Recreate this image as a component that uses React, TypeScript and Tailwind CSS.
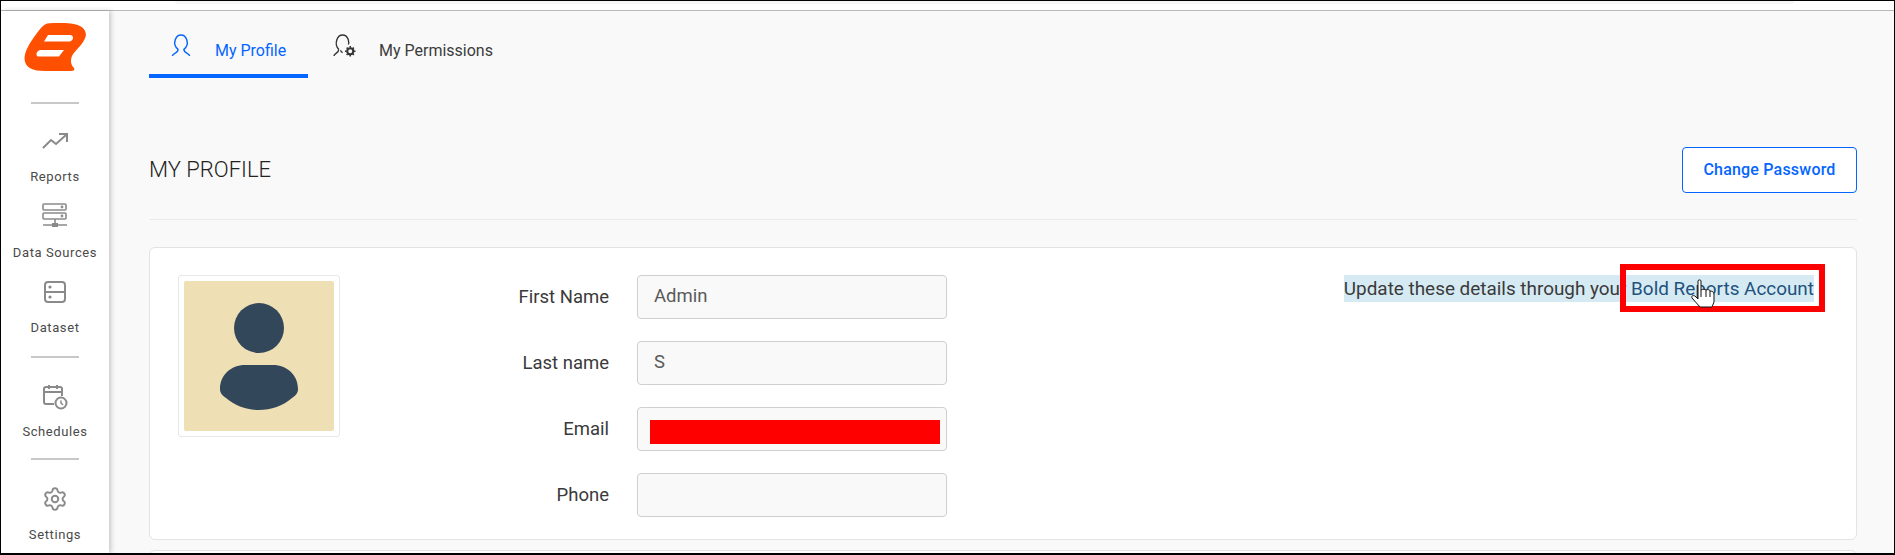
import { Settings } from "lucide-react"

const fields = [
  { label: "First Name", value: "Admin" },
  { label: "Last name", value: "S" },
  { label: "Email", value: "" },
  { label: "Phone", value: "" },
]

function Logo() {
  return (
    <svg width="63" height="49" viewBox="0 0 63 49">
      <path
        fill="#ff4f00"
        fillRule="evenodd"
        d="M23 0.5 C32 -0.5 44 -0.5 52 1.5 C60 3.5 63 9 61.5 14 C59 22 51 27 48 33 C46 38 47 42 50 45 C51 47 50 48 47 48 L21 48 C9 48 0.5 45 0.5 35 C1 27 7 18 13 10 C16 6 19 2 23 0.5 Z M24 12 L46 12 C50 12 50 17 46 18.5 L20 18.5 Z M16 27 L40 27 L35 33.5 L15 33.5 C11 33.5 12 28 16 27 Z"
      />
    </svg>
  )
}

function NavIcon({ name }: { name: string }) {
  const common = { fill: "none", stroke: "#8a8a8a", strokeWidth: 2 }
  if (name === "reports") {
    return (
      <svg width="26" height="20" viewBox="0 0 26 20" {...common}>
        <path d="M1 16 L9 8 L14 12 L24 3" />
        <path d="M17 2 L25 2 L25 10" />
      </svg>
    )
  }
  if (name === "sources") {
    return (
      <svg width="26" height="26" viewBox="0 0 26 26" {...common} strokeWidth="1.6">
        <rect x="1" y="1" width="23" height="6" rx="1" />
        <rect x="1" y="10" width="23" height="6" rx="1" />
        <path d="M13 16 V21 M1 22 H25" />
        <rect x="10" y="20" width="6" height="4" fill="#8a8a8a" stroke="none" />
        <circle cx="20" cy="4" r="0.6" />
        <circle cx="20" cy="13" r="0.6" />
      </svg>
    )
  }
  if (name === "dataset") {
    return (
      <svg width="24" height="24" viewBox="0 0 24 24" {...common}>
        <rect x="2" y="2" width="20" height="20" rx="3" />
        <path d="M2 12 H22" />
        <circle cx="7" cy="7" r="1.6" fill="#8a8a8a" stroke="none" />
        <circle cx="7" cy="17" r="1.6" fill="#8a8a8a" stroke="none" />
      </svg>
    )
  }
  if (name === "schedules") {
    return (
      <svg width="26" height="26" viewBox="0 0 26 26" {...common}>
        <path d="M12 20 H4 C2.5 20 2 19 2 18 V5 C2 4 3 3 4 3 H18 C19 3 20 4 20 5 V12" />
        <path d="M2 8 H20 M7 1 V5 M15 1 V5" />
        <circle cx="19" cy="19" r="5.5" />
        <path d="M19 16.5 V19 L21 21" strokeWidth="1.5" />
      </svg>
    )
  }
  return <Settings size={26} color="#8a8a8a" strokeWidth={1.8} />
}

function NavItem({ icon, label, h, gap }: { icon: string; label: string; h: string; gap: string }) {
  return (
    <div className={`flex flex-col items-center ${h}`}>
      <div className="h-[26px] flex items-center justify-center">
        <NavIcon name={icon} />
      </div>
      <span className={`${gap} text-[13px] leading-[17px] tracking-[0.6px] text-[#4a4a4a] whitespace-nowrap`}>{label}</span>
    </div>
  )
}

function NavLine() {
  return <div className="w-[48px] h-[2px] bg-[#c8c8c8] shrink-0" />
}

export default function App() {
  return (
    <div className="w-[1895px] h-[555px] border border-black border-b-2 overflow-hidden bg-white font-['Roboto',sans-serif] flex flex-col">
      <div className="h-[10px] shrink-0 bg-white border-b border-[#b8b8b8] pl-[174px] pr-[100px]">
        <div className="h-[3px] bg-[#f6f6f6] rounded-b-[6px]" />
      </div>
      <div className="flex flex-1 min-h-0">
        <aside className="w-[108px] shrink-0 bg-white shadow-[2px_0_5px_rgba(0,0,0,0.2)] z-10 flex flex-col items-center pt-[12px]">
          <Logo />
          <div className="mt-[30px]">
            <NavLine />
          </div>
          <div className="mt-[25px]">
            <NavItem icon="reports" label="Reports" h="h-[74px]" gap="mt-[13px]" />
          </div>
          <NavItem icon="sources" label="Data Sources" h="h-[76px]" gap="mt-[15px]" />
          <NavItem icon="dataset" label="Dataset" h="h-[77px]" gap="mt-[14px]" />
          <NavLine />
          <div className="mt-[26px]">
            <NavItem icon="schedules" label="Schedules" h="h-[74px]" gap="mt-[13px]" />
          </div>
          <NavLine />
          <div className="mt-[26px]">
            <NavItem icon="settings" label="Settings" h="h-[60px]" gap="mt-[14px]" />
          </div>
        </aside>
        <main className="flex-1 min-w-0 bg-[#f9f9f9] pl-[40px] pr-[37px]">
          <div className="flex h-[67px]">
            <div className="w-[159px] border-b-4 border-[#0565ff] flex items-center pl-[22px] pt-[17px]">
              <svg className="mb-[11px]" width="20" height="23" viewBox="0 0 20 24" fill="none" stroke="#0565ff" strokeWidth="1.5">
                <path d="M7 16 C3 13 3 9 4 6 C5 3 7 1 10 1 C13 1 15 3 16 6 C17 9 17 13 13 16 C13 18 14 19 16 20 C18 21 19 22 19 23 M7 16 C7 18 6 19 4 20 C2 21 1 22 1 23" />
              </svg>
              <span className="ml-[24px] text-[16px] text-[#0565ff] whitespace-nowrap">My Profile</span>
            </div>
            <div className="flex items-center pl-[25px] pt-[17px] pb-[4px]">
              <svg className="mb-[11px]" width="23" height="23" viewBox="0 0 24 24" fill="none" stroke="#333" strokeWidth="1.4">
                <path d="M6 16 C3 13 3 9 4 6 C5 3 7 1 10 1 C13 1 15 3 16 6 C16.5 8 16.5 10 16 11 M6 16 C6 18 5 19 3.5 20 C2 21 1 22 1 23 M8 17 C8 18 9 19 10 19.5" />
                <circle cx="18" cy="18" r="3.2" strokeWidth="2.2" />
                <path strokeWidth="1.6" d="M18 12.5 V14 M18 22 V23.5 M12.5 18 H14 M22 18 H23.5 M14.2 14.2 L15.2 15.2 M20.8 20.8 L21.8 21.8 M14.2 21.8 L15.2 20.8 M20.8 15.2 L21.8 14.2" />
              </svg>
              <span className="ml-[23px] text-[16px] text-[#3c3c3c] whitespace-nowrap">My Permissions</span>
            </div>
          </div>
          <div className="flex items-center justify-between h-[142px] border-b border-[#ebebeb] pt-[42px]">
            <h1 className="text-[22px] font-light text-[#222] leading-none">MY PROFILE</h1>
            <button className="w-[175px] h-[46px] bg-white border border-[#0565ff] rounded-[4px] text-[16px] font-medium tracking-[0.2px] text-[#0565ff]">
              Change Password
            </button>
          </div>
          <section className="mt-[27px] h-[293px] bg-white border border-[#e3e3e3] rounded-[6px] flex pt-[27px] pl-[28px] relative">
            <div className="w-[162px] h-[162px] border border-[#e8e8e8] rounded-[3px] p-[5px] shrink-0">
              <div className="w-full h-full rounded-[2px] bg-[#efdfb5] flex items-center justify-center">
                <svg width="80" height="107" viewBox="0 0 80 107">
                  <circle cx="40" cy="25" r="25" fill="#33475b" />
                  <path
                    fill="#33475b"
                    d="M26 62 H54 C68 62 79 72 79 86 C79 90 77 92 73 95 C64 103 52 107 40 107 C28 107 16 103 7 95 C3 92 1 90 1 86 C1 72 12 62 26 62 Z"
                  />
                </svg>
              </div>
            </div>
            <div className="ml-[140px] w-[467px] shrink-0 flex flex-col gap-[22px]">
              {fields.map((field, i) => (
                <div key={field.label} className="flex items-center h-[44px]">
                  <label className="w-[129px] shrink-0 pt-[1px] text-right text-[18.5px] text-[#3a3a3a]">{field.label}</label>
                  <div className="ml-[28px] w-[310px] h-[44px] bg-[#f9f9f9] border border-[#cfcfcf] rounded-[4px] pl-[16px] flex items-center text-[18.5px] text-[#5a5a5a] relative">
                    {field.value}
                    {i === 2 && <div className="absolute left-[12px] top-[12px] w-[290px] h-[24px] bg-[#ff0000]" />}
                  </div>
                </div>
              ))}
            </div>
            <div className="absolute right-[42px] top-[27px] h-[27px] bg-[#d6eaf4] text-[18.9px] leading-[27px] text-[#3a3a3a] whitespace-nowrap">
              Update these details through your <span className="text-[#21527d]">Bold Reports Account</span>
            </div>
            <div className="absolute left-[1470px] top-[16px] w-[205px] h-[48px] border-[6px] border-[#ff0000]" />
            <svg className="absolute left-[1540px] top-[31px]" width="26" height="30" viewBox="0 0 26 30">
              <path
                fill="#fff"
                stroke="#111"
                strokeWidth="1"
                d="M8 2 C8 0.5 11 0.5 11 2 V11 C13 10 15 10 16 11 C18 10 20 11 20 12 C22 12 24 13 24 15 V23 L22 28 H10 L2 19 C1 17 3 16 5 17 L8 20 Z"
              />
              <path stroke="#111" fill="none" d="M11 11 V18 M16 11 V18 M20 12 V18" />
            </svg>
          </section>
          <div className="mt-[10px] h-[10px] bg-white border border-[#e3e3e3] rounded-t-[6px]" />
        </main>
      </div>
    </div>
  )
}
